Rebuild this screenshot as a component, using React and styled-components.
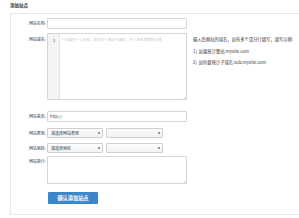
import React from 'react'
import styled, { createGlobalStyle } from 'styled-components'

const Global = createGlobalStyle`
  html, body {
    margin: 0;
    padding: 0;
    overflow: hidden;
    background: #fff;
  }
  body {
    font-family: "Noto Sans CJK SC", "Liberation Sans", sans-serif;
    color: #333;
  }
`

const Page = styled.div`
  width: 299px;
  height: 218px;
  padding: 2px 0 0 10px;
  box-sizing: border-box;
`

const Heading = styled.div`
  font-size: 4.5px;
  line-height: 6px;
  font-weight: 700;
  color: #333;
  height: 11px;
`

const Card = styled.div`
  width: 289px;
  height: 202px;
  border: 1px solid #e8e8e8;
  border-right: none;
  box-sizing: border-box;
  padding-top: 4px;
`

const Row = styled.div`
  display: flex;
  align-items: flex-start;
  margin-top: ${p => p.$mt || 0}px;
`

const Label = styled.div`
  width: 36px;
  padding-right: 1px;
  box-sizing: border-box;
  text-align: right;
  font-size: 4px;
  line-height: ${p => p.$lh || 11}px;
  color: #333;
  white-space: nowrap;
  padding-top: ${p => p.$pt || 0}px;
`

const Input = styled.div`
  width: 140px;
  height: 11px;
  border: 1px solid #d6d6d6;
  border-radius: 1px;
  box-sizing: border-box;
  font-size: 4px;
  line-height: 9px;
  padding: 0 2px;
  color: #444;
`

const Editor = styled.div`
  width: 140px;
  height: 67px;
  border: 1px solid #d6d6d6;
  border-radius: 1px;
  box-sizing: border-box;
  display: flex;
  position: relative;
`

const Gutter = styled.div`
  width: 12px;
  background: #f4f4f4;
  border-right: 1px solid #e4e4e4;
  font-size: 4px;
  line-height: 6px;
  padding-top: 3px;
  padding-left: 5px;
  box-sizing: border-box;
  color: #333;
`

const Placeholder = styled.div`
  font-size: 3.6px;
  line-height: 6px;
  padding: 3px 0 0 1px;
  color: #c8c8c8;
  white-space: nowrap;
  overflow: hidden;
`

const Grip = styled.svg`
  position: absolute;
  right: 0;
  bottom: 0;
  width: 3px;
  height: 3px;
`

const Hint = styled.div`
  margin-left: 6px;
  padding-top: 4px;
  font-size: 4.3px;
  color: #333;
  white-space: nowrap;
`

const HintLine = styled.div`
  line-height: 5px;
  margin-bottom: ${p => p.$mb || 0}px;
`

const Select = styled.div`
  width: ${p => p.$w}px;
  height: 10px;
  margin-right: 3px;
  border: 1px solid #d0d0d0;
  border-radius: 1px;
  box-sizing: border-box;
  background: linear-gradient(#fdfdfd, #f1f1f1);
  font-size: 4px;
  line-height: 8px;
  padding: 0 2px 0 3px;
  display: flex;
  justify-content: space-between;
  align-items: center;
  color: #333;
`

const Arrows = styled.span`
  display: flex;
  flex-direction: column;
  align-items: center;
  gap: 0.5px;
  &::before, &::after {
    content: '';
    border-left: 1px solid transparent;
    border-right: 1px solid transparent;
  }
  &::before { border-bottom: 1.5px solid #333; }
  &::after { border-top: 1.5px solid #333; }
`

const Area = styled.div`
  width: 140px;
  height: 28px;
  border: 1px solid #d6d6d6;
  border-radius: 1px;
  box-sizing: border-box;
  position: relative;
`

const Button = styled.div`
  margin-left: 37px;
  width: 50px;
  height: 12px;
  background: #3a87cc;
  border-radius: 1px;
  color: #fff;
  font-size: 5.2px;
  line-height: 12px;
  text-align: center;
  font-weight: 700;
`

const ResizeGrip = () => (
  <Grip viewBox="0 0 3 3">
    <path d="M0.5 3 L3 0.5 M1.8 3 L3 1.8" stroke="#999" strokeWidth="0.4" />
  </Grip>
)

export default function App() {
  return (
    <Page>
      <Global />
      <Heading>添加站点</Heading>
      <Card>
        <Row $mt={0}>
          <Label>网站名称:</Label>
          <Input />
        </Row>
        <Row $mt={4}>
          <Label $lh={6} $pt={3}>网站域名:</Label>
          <Editor>
            <Gutter>1</Gutter>
            <Placeholder>一行填写一个域名，如有多个请分行填写，多个域名用回车分隔</Placeholder>
            <ResizeGrip />
          </Editor>
          <Hint>
            <HintLine $mb={7}>输入您网站的域名，如有多个请分行填写，填写示例:</HintLine>
            <HintLine $mb={6}>1)&nbsp;&nbsp;如果统计整站:mysite.com</HintLine>
            <HintLine>2)&nbsp;&nbsp;如何要统计子域名:sub.mysite.com</HintLine>
          </Hint>
        </Row>
        <Row $mt={11}>
          <Label>网站首页:</Label>
          <Input>http://</Input>
        </Row>
        <Row $mt={6}>
          <Label $lh={10}>网站类型:</Label>
          <Select $w={56}>请选择网站类型<Arrows /></Select>
          <Select $w={57}><span /><Arrows /></Select>
        </Row>
        <Row $mt={5}>
          <Label $lh={10}>网站地区:</Label>
          <Select $w={56}>请选择地区<Arrows /></Select>
          <Select $w={57}><span /><Arrows /></Select>
        </Row>
        <Row $mt={3}>
          <Label $lh={6} $pt={2}>网站简介:</Label>
          <Area><ResizeGrip /></Area>
        </Row>
        <Row $mt={8}>
          <Button>确认添加站点</Button>
        </Row>
      </Card>
    </Page>
  )
}
